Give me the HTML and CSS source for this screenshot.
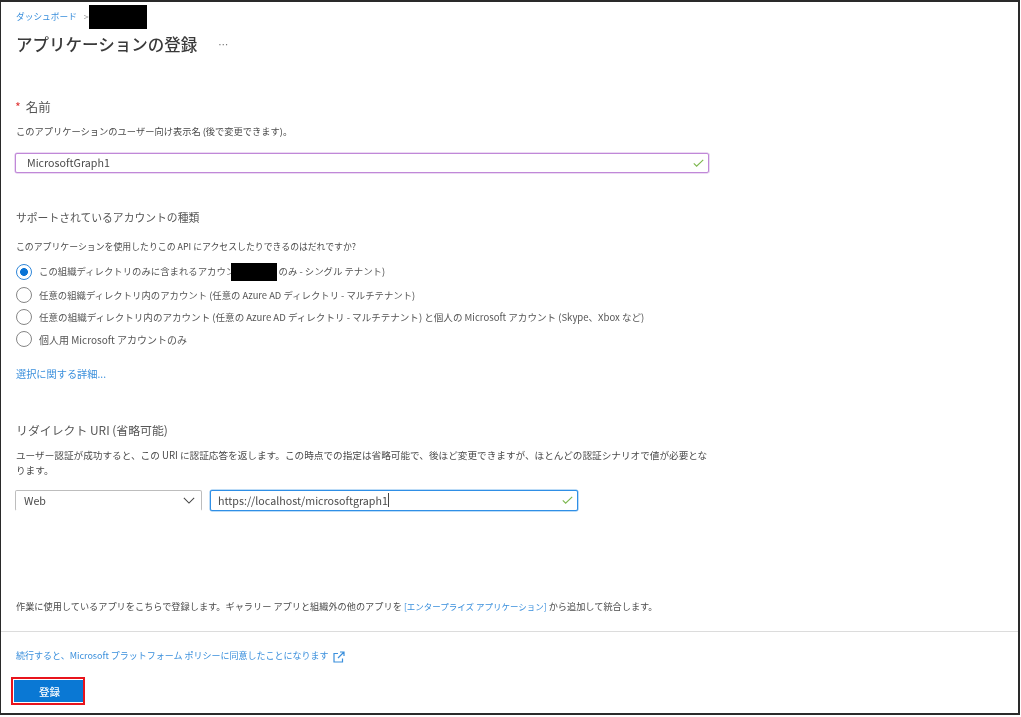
FILE: index.html
```html
<!DOCTYPE html>
<html lang="ja">
<head>
<meta charset="utf-8">
<title>アプリケーションの登録</title>
<link rel="stylesheet" href="styles.css">
</head>
<body>
<main class="frame">
  <nav class="crumbs"><a class="link" href="#">ダッシュボード</a><span class="sep">&gt;</span><span class="mask mask-crumb"></span></nav>
  <header class="title-row"><h1>アプリケーションの登録</h1><span class="more">…</span></header>

  <section class="form">
    <h2 class="label label-name"><span class="req">*</span> 名前</h2>
    <p class="help help-name">このアプリケーションのユーザー向け表示名 (後で変更できます)。</p>
    <div class="field field-name">
      <span class="value">MicrosoftGraph1</span>
      <svg class="check" viewBox="0 0 14 10"><path d="M1 5.5 4.6 9 13 1"/></svg>
    </div>

    <h2 class="label label-account">サポートされているアカウントの種類</h2>
    <p class="help help-account">このアプリケーションを使用したりこの API にアクセスしたりできるのはだれですか?</p>
    <ul class="radios">
      <li class="radio on"><span class="dot"></span><span>この組織ディレクトリのみに含まれるアカウント<span class="mask mask-org"></span>のみ - シングル テナント)</span></li>
      <li class="radio"><span class="dot"></span><span>任意の組織ディレクトリ内のアカウント (任意の Azure AD ディレクトリ - マルチテナント)</span></li>
      <li class="radio radio-both"><span class="dot"></span><span>任意の組織ディレクトリ内のアカウント (任意の Azure AD ディレクトリ - マルチテナント) と個人の Microsoft アカウント (Skype、Xbox など)</span></li>
      <li class="radio radio-personal"><span class="dot"></span><span>個人用 Microsoft アカウントのみ</span></li>
    </ul>
    <a class="link more-link" href="#">選択に関する詳細...</a>

    <h2 class="label label-redirect">リダイレクト URI (省略可能)</h2>
    <p class="help help-redirect">ユーザー認証が成功すると、この URI に認証応答を返します。この時点での指定は省略可能で、後ほど変更できますが、ほとんどの認証シナリオで値が必要となります。</p>
    <div class="uri-row">
      <div class="select">
        <span class="value">Web</span>
        <svg class="chev" viewBox="0 0 14 8"><path d="M1 1 7 7 13 1"/></svg>
      </div>
      <div class="field field-uri">
        <span class="value">https://localhost/microsoftgraph1</span><span class="caret"></span>
        <svg class="check" viewBox="0 0 14 10"><path d="M1 5.5 4.6 9 13 1"/></svg>
      </div>
    </div>
    <p class="help help-enterprise">作業に使用しているアプリをこちらで登録します。ギャラリー アプリと組織外の他のアプリを <a class="link" href="#">[エンタープライズ アプリケーション]</a> から追加して統合します。</p>
  </section>

  <footer class="foot">
    <p class="policy"><a class="link" href="#">続行すると、Microsoft プラットフォーム ポリシーに同意したことになります</a>
      <svg class="ext" viewBox="0 0 12 12"><path d="M5 2.500H1v8.500h8.500V7.500M7 1h4v4M11 1 5 7"/></svg></p>
    <div class="btn-mark"><button class="btn" type="button">登録</button></div>
  </footer>
</main>
</body>
</html>
```

FILE: styles.css
```css
* { box-sizing: border-box; }
html, body { margin: 0; padding: 0; background: #fff; }
body { width: 1021px; height: 717px; overflow: hidden; }
body, button {
  font-family: "Noto Sans CJK JP", "Open Sans", "Liberation Sans", sans-serif;
  color: #4a4a4a;
}
.frame {
  width: 1020px;
  height: 715px;
  border: solid #2a2a2a;
  border-width: 2px 2px 2px 1px;
  display: flex;
  flex-direction: column;
  background: #fff;
}
.crumbs, .title-row, .form, .foot { filter: blur(0.35px); }
.link { color: #3a8fdc; text-decoration: none; }
.mask { display: inline-block; background: #000; }

.crumbs {
  height: 27px;
  padding: 3px 0 0 15px;
  display: flex;
  align-items: flex-start;
  font-size: 8.700px;
}
.crumbs .link { line-height: 24px; }
.sep { margin-left: 7px; line-height: 24px; font-size: 9px; color: #9a9a9a; }
.mask-crumb { width: 58px; height: 24px; margin-left: 0; }

.title-row {
  height: 30px;
  padding-left: 15px;
  display: flex;
  align-items: center;
}
h1 { margin: 0; font-size: 16.500px; font-weight: 500; color: #3a3a3a; line-height: 30px; }
.more { margin-left: 21px; font-size: 10px; color: #666; }

.form { padding-left: 14px; flex: 1; }
.label { margin: 0; font-weight: 400; line-height: 18px; color: #555; }
.label-name { margin-top: 39px; font-size: 12.500px; }
.req { color: #e03a3a; margin-right: 2px; }
.help { margin: 0; line-height: 15px; color: #4a4a4a; padding-left: 1px; }
.help-name { margin-top: 8px; font-size: 9.250px; }

.field, .select {
  display: flex;
  align-items: center;
  background: #fff;
  font-size: 10.700px;
}
.value { color: #4a4a4a; }
.field-name {
  margin-top: 14px;
  height: 20px;
  width: 694px;
  padding: 0 4px 1px 11px;
  border: 1px solid #c088d8;
  border-radius: 2px;
  box-shadow: 1px 0 0 #eadcf2, 0 0 0 0.500px #d9b6e8;
}
.check { margin-left: auto; width: 11px; height: 8px; fill: none; stroke: #7db84f; stroke-width: 1.500; }

.label-account { margin-top: 35px; font-size: 10.800px; padding-left: 1px; }
.help-account { margin-top: 13px; font-size: 8.900px; }
.radios { list-style: none; margin: 7px 0 0; padding: 0 0 0 1px; font-size: 9.400px; }
.radio { display: flex; align-items: center; height: 22.400px; gap: 7px; color: #555; white-space: nowrap; }
.radio-both { font-size: 9.560px; }
.radio-personal { font-size: 10px; }
.dot {
  flex: none;
  width: 16px;
  height: 16px;
  border: 1px solid #858585;
  border-radius: 50%;
  background: #fff;
}
.on .dot { border-color: #2f86d8; background: radial-gradient(circle, #0a74d6 0 3.600px, #fff 4.200px); }
.mask-org { width: 46px; height: 18px; vertical-align: middle; margin-left: -14px; margin-right: 2px; }
.more-link { display: block; margin-top: 15px; font-size: 10.200px; line-height: 15px; padding-left: 1px; }

.label-redirect { margin-top: 40px; font-size: 11.900px; padding-left: 1px; }
.help-redirect { margin-top: 9px; width: 698px; font-size: 9.630px; }
.uri-row { display: flex; gap: 8px; margin-top: 12px; }
.select {
  height: 21px;
  width: 187px;
  padding: 0 6px 0 8px;
  border: 1px solid #bdbdbd;
  border-bottom-color: transparent;
  border-radius: 2px;
}
.chev { margin-left: auto; width: 12px; height: 7px; fill: none; stroke: #444; stroke-width: 1.200; }
.field-uri {
  height: 21px;
  width: 368px;
  padding: 0 4px 0 7px;
  border: 1px solid #2f8fe6;
  border-radius: 2px;
  box-shadow: 0 0 0 0.500px #7cb9ef;
}
.caret { width: 1px; height: 14px; background: #444; }
.help-enterprise { margin-top: 88px; font-size: 9.180px; }
.help-enterprise .link { font-size: 8.500px; }

.foot { border-top: 1px solid #dcdcdc; height: 82px; padding-left: 15px; }
.policy { margin: 16px 0 0; font-size: 9px; line-height: 15px; display: flex; align-items: center; gap: 4px; }
.ext { width: 12px; height: 12px; fill: none; stroke: #3a8fdc; stroke-width: 1.200; margin-top: 2px; }
.btn-mark {
  width: 74px;
  height: 28px;
  margin: 14px 0 0 -5px;
  border: 2.500px solid #e8141c;
  padding: 1px 0 0 0.500px;
}
.btn {
  display: block;
  width: 69px;
  height: 22px;
  border: 0;
  padding: 0 0 0 3px;
  background: #0a78d4;
  color: #fff;
  font-size: 10.500px;
  font-weight: 500;
}
```
